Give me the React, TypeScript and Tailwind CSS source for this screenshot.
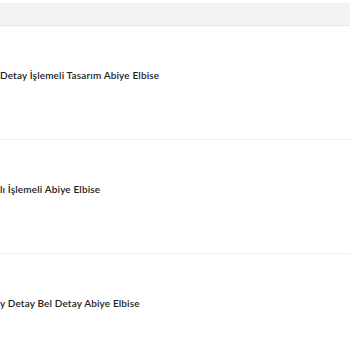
import React from "react";

const items = [
  "Detay İşlemeli Tasarım Abiye Elbise",
  "lı İşlemeli Abiye Elbise",
  "y Detay Bel Detay Abiye Elbise",
];

export default function App() {
  return (
    <div className="w-[350px] h-[350px] overflow-hidden bg-white font-['Lato','Noto_Sans',sans-serif]">
      <div className="pt-[3px]">
        <div className="h-[23px] bg-[#f3f3f3] border-b border-[#e6e6e6]" />
      </div>
      {items.map((title) => (
        <div key={title} className="h-[114px] border-b border-[#eeeeee] pt-[43px]">
          <p className="whitespace-nowrap text-[10px] leading-[12px] font-semibold tracking-[0.15px] text-[#222222]">
            {title}
          </p>
        </div>
      ))}
    </div>
  );
}
